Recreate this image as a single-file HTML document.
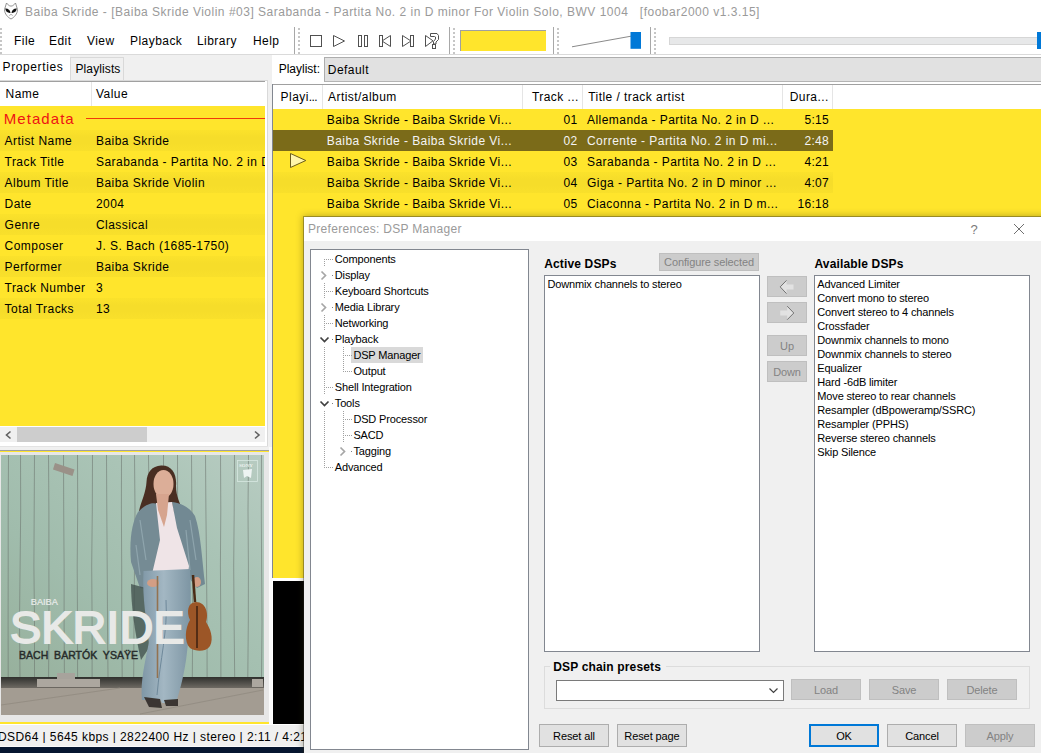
<!DOCTYPE html>
<html><head><meta charset="utf-8">
<style>
*{box-sizing:border-box;margin:0;padding:0}
html,body{width:1041px;height:753px;overflow:hidden;background:#fff}
body{position:relative;font-family:"Liberation Sans",sans-serif;color:#000}
.a{position:absolute}
.t{position:absolute;white-space:nowrap;font-size:12px;line-height:12px;letter-spacing:0.45px}
.d{position:absolute;white-space:nowrap;font-size:11px;line-height:11px;letter-spacing:-0.15px}
.b{font-weight:bold;font-size:12px;line-height:12px;letter-spacing:0.15px}
.btn{position:absolute;background:#e1e1e1;border:1px solid #adadad;font-size:11px;line-height:11px;text-align:center;white-space:nowrap;letter-spacing:-0.1px}
.dis{background:#cccccc;border-color:#bfbfbf;color:#838383}
.sep{position:absolute;width:1px;background:#a8a8a8}
.grip{position:absolute;width:2px;background:repeating-linear-gradient(to bottom,#c6c6c6 0 2px,transparent 2px 4px)}
</style></head><body>

<!-- ===== TITLE BAR ===== -->
<div class="a" style="left:0;top:0;width:1041px;height:55px;background:#fff"></div>
<svg class="a" style="left:0;top:0" width="22" height="22" viewBox="0 0 22 22">
  <path d="M6.5 3 L9.5 6 L12.5 6 L15.5 3 L17.5 9.5 C17.5 14 14 17.5 11 19 C8 17.5 4.5 14 4.5 9.5 Z" fill="#fff" stroke="#777" stroke-width="0.8"/>
  <path d="M5.2 8.6 C8 8.4 10.3 10 10.5 13 C7.5 13.3 5.5 11.5 5.2 8.6 Z" fill="#111"/>
  <path d="M16.8 8.6 C14 8.4 11.7 10 11.5 13 C14.5 13.3 16.5 11.5 16.8 8.6 Z" fill="#111"/>
  <path d="M9.3 15.5 L11 14.3 L12.7 15.5" fill="none" stroke="#888" stroke-width="0.7"/>
</svg>
<div class="t" style="left:25px;top:6px;color:#9a9a9a;letter-spacing:0.5px">Baiba Skride - [Baiba Skride Violin #03] Sarabanda - Partita No. 2 in D minor For Violin Solo, BWV 1004 &nbsp;&nbsp;[foobar2000 v1.3.15]</div>

<!-- ===== MENU / TOOLBAR ===== -->
<div class="grip" style="left:0;top:28px;height:26px"></div>
<div class="t" style="left:14px;top:34.7px">File</div>
<div class="t" style="left:49px;top:34.7px">Edit</div>
<div class="t" style="left:87px;top:34.7px">View</div>
<div class="t" style="left:130px;top:34.7px">Playback</div>
<div class="t" style="left:197px;top:34.7px">Library</div>
<div class="t" style="left:253px;top:34.7px">Help</div>
<div class="sep" style="left:294px;top:27px;height:28px"></div>
<div class="grip" style="left:298px;top:28px;height:26px"></div>
<svg class="a" style="left:305px;top:30px" width="140" height="22" viewBox="0 0 140 22">
  <g fill="none" stroke="#505050" stroke-width="1">
    <rect x="5.5" y="5.5" width="11" height="11"/>
    <path d="M28.5 5.5 L39.5 11 L28.5 16.5 Z"/>
    <rect x="53.5" y="5.5" width="3" height="11"/><rect x="59.5" y="5.5" width="3" height="11"/>
    <rect x="74.5" y="5.5" width="3" height="11"/><path d="M85.5 5.5 L77 11 L85.5 16.5 Z"/>
    <path d="M97.5 5.5 L106 11 L97.5 16.5 Z"/><rect x="105.5" y="5.5" width="3" height="11"/>
    <path d="M120.5 5.5 L128 10.8 L120.5 16.5 Z"/><path d="M125.5 3.5 H132 L133.5 5.5 V9.5 L131 12 V14 H128.5 V11.5 L130.5 9 V7 L129.5 6.5 H125.5 Z" fill="#fff"/><rect x="127.5" y="14.5" width="3" height="4"/>
  </g>
</svg>
<div class="sep" style="left:449px;top:27px;height:28px"></div>
<div class="grip" style="left:453px;top:28px;height:26px"></div>
<div class="a" style="left:460px;top:30px;width:86px;height:21px;background:#ffe52c;border-top:1px solid #a0a0a0;border-left:1px solid #a0a0a0"></div>
<div class="sep" style="left:553px;top:27px;height:28px"></div>
<div class="grip" style="left:557px;top:28px;height:26px"></div>
<svg class="a" style="left:570px;top:30px" width="80" height="22"><path d="M2 16.8 L61 6.2" stroke="#8a8a8a" stroke-width="1"/><rect x="60.5" y="2" width="10.5" height="16.8" fill="#0078d7"/></svg>
<div class="sep" style="left:650px;top:27px;height:28px"></div>
<div class="grip" style="left:654px;top:28px;height:26px"></div>
<div class="a" style="left:669px;top:37px;width:380px;height:8px;background:#e7e8e9;border:1px solid #d6d6d6"></div>
<div class="a" style="left:1037px;top:32px;width:10px;height:17px;background:#0078d7"></div>
<div class="a" style="left:0;top:54px;width:1041px;height:1px;background:#dadada"></div>

<!-- ===== LEFT PANEL ===== -->
<div class="a" style="left:0;top:55px;width:272px;height:670px;background:#f0f0f0"></div>
<div class="a" style="left:0;top:55px;width:70px;height:27px;background:#fff"></div>
<div class="a" style="left:70px;top:57px;width:54px;height:23px;background:#f0f0f0;border:1px solid #d9d9d9;border-bottom:none"></div>
<div class="t" style="left:2.6px;top:60.7px;letter-spacing:0.6px">Properties</div>
<div class="t" style="left:75.5px;top:63.3px;letter-spacing:0.1px">Playlists</div>
<!-- list box -->
<div class="a" style="left:0;top:80px;width:268px;height:367px;background:#fff;border-top:1px solid #d9d9d9;border-right:1px solid #d9d9d9"></div>
<div class="a" style="left:0;top:81px;width:265px;height:1px;background:#a0a0a0"></div>
<div class="a" style="left:91px;top:82px;width:1px;height:24px;background:#e5e5e5"></div>
<div class="t" style="left:5.6px;top:87.6px">Name</div>
<div class="t" style="left:96px;top:87.6px">Value</div>
<div class="a" id="props" style="left:0;top:106px;width:265px;height:320px;background:#ffe52c;overflow:hidden">
<div class="t" style="left:3.8px;top:5px;font-size:15px;line-height:15px;letter-spacing:1.05px;color:#ee1414">Metadata</div>
<div class="a" style="left:86px;top:12px;width:179px;height:1px;background:#f0380c"></div>
<div class="a" style="left:0;top:24px;width:265px;height:21px;background:linear-gradient(to bottom,#fbe22b,#f6dd2a 35%,#f6dd2a 65%,#f9e02b)"></div>
<div class="t" style="left:4.6px;top:29.1px">Artist Name</div>
<div class="t" style="left:96px;top:29.1px">Baiba Skride</div>
<div class="t" style="left:4.6px;top:50.1px">Track Title</div>
<div class="t" style="left:96px;top:50.1px">Sarabanda - Partita No. 2 in D minor For Violin Solo, BWV 1004</div>
<div class="a" style="left:0;top:66px;width:265px;height:21px;background:linear-gradient(to bottom,#fbe22b,#f6dd2a 35%,#f6dd2a 65%,#f9e02b)"></div>
<div class="t" style="left:4.6px;top:71.1px">Album Title</div>
<div class="t" style="left:96px;top:71.1px">Baiba Skride Violin</div>
<div class="t" style="left:4.6px;top:92.1px">Date</div>
<div class="t" style="left:96px;top:92.1px">2004</div>
<div class="a" style="left:0;top:108px;width:265px;height:21px;background:linear-gradient(to bottom,#fbe22b,#f6dd2a 35%,#f6dd2a 65%,#f9e02b)"></div>
<div class="t" style="left:4.6px;top:113.1px">Genre</div>
<div class="t" style="left:96px;top:113.1px">Classical</div>
<div class="t" style="left:4.6px;top:134.1px">Composer</div>
<div class="t" style="left:96px;top:134.1px">J. S. Bach (1685-1750)</div>
<div class="a" style="left:0;top:150px;width:265px;height:21px;background:linear-gradient(to bottom,#fbe22b,#f6dd2a 35%,#f6dd2a 65%,#f9e02b)"></div>
<div class="t" style="left:4.6px;top:155.1px">Performer</div>
<div class="t" style="left:96px;top:155.1px">Baiba Skride</div>
<div class="t" style="left:4.6px;top:176.1px">Track Number</div>
<div class="t" style="left:96px;top:176.1px">3</div>
<div class="a" style="left:0;top:192px;width:265px;height:21px;background:linear-gradient(to bottom,#fbe22b,#f6dd2a 35%,#f6dd2a 65%,#f9e02b)"></div>
<div class="t" style="left:4.6px;top:197.1px">Total Tracks</div>
<div class="t" style="left:96px;top:197.1px">13</div>
</div>


<!-- scrollbar -->
<div class="a" style="left:0;top:427px;width:265px;height:15px;background:#f0f0f0"></div>
<div class="a" style="left:17px;top:427px;width:130px;height:15px;background:#cdcdcd"></div>
<svg class="a" style="left:4px;top:430px" width="10" height="10"><path d="M6.5 1.5 L2.5 5 L6.5 8.5" fill="none" stroke="#606060" stroke-width="1.6"/></svg>
<svg class="a" style="left:252px;top:430px" width="10" height="10"><path d="M3 1.5 L7 5 L3 8.5" fill="none" stroke="#606060" stroke-width="1.6"/></svg>
<div class="a" style="left:0;top:446px;width:268px;height:1px;background:#e3e3e3"></div>

<!-- album art panel -->
<div class="a" style="left:0;top:450px;width:270px;height:1px;background:#a0a0a0"></div>
<div class="a" style="left:0;top:451px;width:270px;height:1px;background:#ffe52c"></div>
<div class="a" style="left:0;top:452px;width:269px;height:270px;background:#e7e7e7"></div><div class="a" style="left:269px;top:447px;width:3px;height:278px;background:#fbfbfb"></div>
<div class="a" style="left:0;top:722px;width:269px;height:2px;background:#ffe52c"></div>
<div class="a" id="art" style="left:1px;top:455px;width:263px;height:260px;overflow:hidden;background:#a3c0b1">
<svg width="263" height="260" viewBox="1 455 263 260" style="position:absolute;left:0;top:0">
<defs><linearGradient id="wall" x1="0" y1="1" x2="1" y2="0"><stop offset="0" stop-color="#97b09c"/><stop offset="0.35" stop-color="#a0bcac"/><stop offset="0.7" stop-color="#aac4b6"/><stop offset="1" stop-color="#b8ccc2"/></linearGradient><linearGradient id="shd" x1="0" y1="0" x2="0" y2="1"><stop offset="0" stop-color="#2f302d"/><stop offset="1" stop-color="#6e6a63"/></linearGradient><linearGradient id="jean" x1="0" y1="0" x2="1" y2="0"><stop offset="0" stop-color="#7f97a6"/><stop offset="0.45" stop-color="#a3b7c3"/><stop offset="1" stop-color="#7d95a3"/></linearGradient><filter id="bl"><feGaussianBlur stdDeviation="0.7"/></filter></defs>
<rect x="1" y="455" width="263" height="223" fill="url(#wall)"/>
<path d="M8.5 455 L8.2 510 L8.2 566 L8.1 622 L8.2 677" stroke="#68706a" stroke-width="0.6" fill="none" opacity="0.9"/>
<path d="M20.5 455 L20.7 510 L20.1 566 L19.5 622 L20.0 677" stroke="#68706a" stroke-width="0.6" fill="none" opacity="0.9"/>
<path d="M34.5 455 L34.2 510 L33.9 566 L34.5 622 L34.5 677" stroke="#68706a" stroke-width="0.6" fill="none" opacity="0.9"/>
<path d="M48.5 455 L48.9 510 L48.9 566 L49.0 622 L48.6 677" stroke="#68706a" stroke-width="0.6" fill="none" opacity="0.9"/>
<path d="M63.5 455 L63.7 510 L64.1 566 L64.1 622 L64.4 677" stroke="#68706a" stroke-width="0.6" fill="none" opacity="0.9"/>
<path d="M77.5 455 L77.7 510 L77.2 566 L77.5 622 L77.6 677" stroke="#68706a" stroke-width="0.6" fill="none" opacity="0.9"/>
<path d="M92.5 455 L92.3 510 L91.7 566 L92.1 622 L92.1 677" stroke="#68706a" stroke-width="0.6" fill="none" opacity="0.9"/>
<path d="M106.5 455 L106.8 510 L107.2 566 L107.5 622 L108.0 677" stroke="#68706a" stroke-width="0.6" fill="none" opacity="0.9"/>
<path d="M121.5 455 L121.4 510 L121.7 566 L121.7 622 L122.2 677" stroke="#68706a" stroke-width="0.6" fill="none" opacity="0.9"/>
<path d="M134.5 455 L135.0 510 L134.5 566 L134.0 622 L133.7 677" stroke="#68706a" stroke-width="0.6" fill="none" opacity="0.9"/>
<path d="M148.5 455 L149.1 510 L149.0 566 L149.1 622 L148.9 677" stroke="#68706a" stroke-width="0.6" fill="none" opacity="0.9"/>
<path d="M163.5 455 L163.5 510 L163.4 566 L163.2 622 L163.3 677" stroke="#68706a" stroke-width="0.6" fill="none" opacity="0.9"/>
<path d="M177.5 455 L177.6 510 L178.1 566 L178.3 622 L178.8 677" stroke="#68706a" stroke-width="0.6" fill="none" opacity="0.9"/>
<path d="M191.5 455 L191.9 510 L192.5 566 L192.7 622 L192.3 677" stroke="#68706a" stroke-width="0.6" fill="none" opacity="0.9"/>
<path d="M205.5 455 L205.9 510 L206.5 566 L207.0 622 L207.1 677" stroke="#68706a" stroke-width="0.6" fill="none" opacity="0.9"/>
<path d="M220.5 455 L220.8 510 L220.4 566 L220.8 622 L220.9 677" stroke="#68706a" stroke-width="0.6" fill="none" opacity="0.9"/>
<path d="M234.5 455 L234.2 510 L233.7 566 L234.1 622 L234.7 677" stroke="#68706a" stroke-width="0.6" fill="none" opacity="0.9"/>
<path d="M248.5 455 L248.0 510 L248.4 566 L248.3 622 L247.8 677" stroke="#68706a" stroke-width="0.6" fill="none" opacity="0.9"/>
<path d="M261.5 455 L261.3 510 L261.6 566 L262.0 622 L261.5 677" stroke="#68706a" stroke-width="0.6" fill="none" opacity="0.9"/>
<rect x="1" y="677" width="263" height="11" fill="url(#shd)"/>
<rect x="1" y="688" width="263" height="27" fill="#a39c92"/>
<path d="M1 705 L120 688 M140 714 L263 690" stroke="#918a80" stroke-width="0.8"/>
<rect x="37" y="679" width="63" height="8" fill="#aca79f"/><rect x="57" y="673" width="18" height="6" fill="#a7a39c"/>
<rect x="252" y="679" width="11" height="8" fill="#aca79f"/>
<path d="M53 469.5 L55 463 L74.5 469.5 L72.5 476 Z" fill="#9a9188"/>
<g filter="url(#bl)">
<path d="M161 465.5 C172 465 177 474 176 486 C176 496 180 504 184 512 C184 516 178 517 173 514 L152 514 C147 514 142 513 139 511 C141 502 146 492 146.5 482 C147 472 152 466 161 465.5 Z" fill="#4a2f22"/>
<path d="M138 512 C146 504 152 502 158 504 L163 535 L160 572 L152 590 L140 588 L131 562 C129 540 132 522 138 512 Z" fill="#758b94"/>
<path d="M172 502 C182 503 190 508 195 516 C201 534 202 560 205 584 L197 588 L189 578 L184 556 L176 528 Z" fill="#728993"/>
<path d="M140 520 L146 560 M136 545 L140 575 M190 520 L196 560 M186 530 L190 570" stroke="#9ab0b8" stroke-width="1.2" opacity="0.7"/>
<path d="M156 503 L172 502 L177 528 L189 566 L188 574 L152 574 L160 540 Z" fill="#efe4e7"/>
<ellipse cx="163.5" cy="484" rx="10" ry="14" fill="#dcae98"/>
<path d="M156 494 L169 494 L167 515 L164 527 L158 510 Z" fill="#d6a48e"/>
<path d="M131 584 L146 588 L149 648 L141 660 C135 635 131 605 131 584 Z" fill="#3f4e4b" opacity="0.75"/><path d="M143.5 571 L190 569 C192 600 190 630 187 652 C185 672 180 690 176 703 L162 703 L160 699 L142 700 C140 682 145 662 149 642 C147 622 142 600 143.5 571 Z" fill="url(#jean)"/>
<path d="M166 600 C168 630 160 660 157 695" stroke="#6e889a" stroke-width="1" fill="none"/>
<ellipse cx="153" cy="583" rx="6" ry="4" fill="#d39e85"/><ellipse cx="197" cy="582" rx="4" ry="5" fill="#d39e85"/>
<path d="M144 697 L160 699 L162 708 L149 707 Z" fill="#3a3630"/><path d="M164 700 L178 699 L178 706 L166 706 Z" fill="#3a3630"/>
</g>
<path d="M157.5 576 V678" stroke="#937250" stroke-width="1.6"/>
<path d="M193 575 L195 602" stroke="#4a2a14" stroke-width="2.5"/>
<path d="M196 602 C188 602 186 612 190 620 C185 628 184 642 190 648 C196 652 206 652 210 646 C214 638 210 628 206 622 C209 614 206 602 196 602 Z" fill="#9c5627"/>
<path d="M197 606 V648" stroke="#3d2010" stroke-width="1.5"/>
<text x="30.8" y="605.3" font-family="Liberation Sans" font-size="9" fill="#e9ecea" stroke="#e9ecea" stroke-width="0.2" textLength="27" lengthAdjust="spacingAndGlyphs">BAIBA</text>
<text x="10" y="643.3" font-family="Liberation Sans" font-size="45" fill="#e8e9e7" stroke="#e8e9e7" stroke-width="1.8" textLength="174.5" lengthAdjust="spacingAndGlyphs">SKRIDE</text>
<text x="19" y="658.6" font-family="Liberation Sans" font-size="11.5" fill="#262b2a" stroke="#262b2a" stroke-width="0.45" textLength="119" lengthAdjust="spacingAndGlyphs" xml:space="preserve">BACH  BARTÓK  YSAŸE</text>
<rect x="237.5" y="460.5" width="20" height="21" fill="none" stroke="#d8e8e2" stroke-width="0.8"/>
<text x="239" y="467" font-family="Liberation Serif" font-weight="bold" font-size="5" fill="#eef4f2">SONY</text>
<path d="M243 470 L252 469 L251 478 L247 476 L244 478 Z" fill="#eef4f2"/>
</svg>
</div>

<!-- status bar -->
<div class="a" style="left:0;top:725px;width:304px;height:21px;background:#f0f0f0"></div>
<div class="a" style="left:0;top:724px;width:304px;height:1px;background:#fff"></div>
<div class="t" style="left:-2px;top:731px;width:306px;overflow:hidden;letter-spacing:0.42px">DSD64 | 5645 kbps | 2822400 Hz | stereo | 2:11 / 4:21</div>
<div class="a" style="left:0;top:746px;width:304px;height:1px;background:#fafafa"></div><div class="a" style="left:0;top:747px;width:304px;height:6px;background:#061630"></div>

<!-- ===== PLAYLIST PANEL ===== -->
<div class="a" style="left:272px;top:55px;width:769px;height:670px;background:#fff"></div>
<div class="t" style="left:278.7px;top:62.6px;letter-spacing:0px">Playlist:</div>
<div class="a" style="left:324px;top:57px;width:717px;height:25px;background:#e1e1e1;border-top:1px solid #adadad;border-left:1px solid #adadad;border-bottom:1px solid #b4b4b4"></div>
<div class="t" style="left:327.8px;top:63.5px">Default</div>
<div class="a" style="left:272px;top:84px;width:769px;height:1px;background:#a0a0a0"></div>
<div class="a" style="left:272px;top:84px;width:1px;height:494px;background:#828790"></div>
<div class="a" id="pl" style="left:273px;top:85px;width:768px;height:493px;background:#fff;overflow:hidden">
<div class="a" style="left:49px;top:0;width:1px;height:24px;background:#e5e5e5"></div>
<div class="a" style="left:249px;top:0;width:1px;height:24px;background:#e5e5e5"></div>
<div class="a" style="left:309px;top:0;width:1px;height:24px;background:#e5e5e5"></div>
<div class="a" style="left:509px;top:0;width:1px;height:24px;background:#e5e5e5"></div>
<div class="a" style="left:559px;top:0;width:1px;height:24px;background:#e5e5e5"></div>
<div class="t" style="left:7.6px;top:5.9px;" >Playi<span style="letter-spacing:-0.6px">...</span></div>
<div class="t" style="left:55.0px;top:5.9px;">Artist/album</div>
<div class="t" style="left:258.9px;top:5.9px;">Track ...</div>
<div class="t" style="left:315.2px;top:5.9px;">Title / track artist</div>
<div class="t" style="left:516.7px;top:5.9px;">Dura...</div>
<div class="a" style="left:0;top:24px;width:768px;height:469px;background:#ffe52c"></div>
<div class="t" style="left:53.7px;top:28.6px;">Baiba Skride - Baiba Skride Vi...</div>
<div class="t" style="left:249px;top:28.6px;width:55.5px;text-align:right;letter-spacing:0.3px">01</div>
<div class="t" style="left:314.0px;top:28.6px;">Allemanda - Partita No. 2 in D ...</div>
<div class="t" style="left:509px;top:28.6px;width:47px;text-align:right;letter-spacing:0.3px">5:15</div>
<div class="a" style="left:0;top:45px;width:560px;height:21px;background:#7b6b19"></div>
<div class="t" style="left:53.7px;top:49.6px;color:#f4f4f4;">Baiba Skride - Baiba Skride Vi...</div>
<div class="t" style="left:249px;top:49.6px;width:55.5px;text-align:right;color:#f4f4f4;letter-spacing:0.3px">02</div>
<div class="t" style="left:314.0px;top:49.6px;color:#f4f4f4;">Corrente - Partita No. 2 in D mi...</div>
<div class="t" style="left:509px;top:49.6px;width:47px;text-align:right;color:#f4f4f4;letter-spacing:0.3px">2:48</div>
<div class="t" style="left:53.7px;top:70.6px;">Baiba Skride - Baiba Skride Vi...</div>
<div class="t" style="left:249px;top:70.6px;width:55.5px;text-align:right;letter-spacing:0.3px">03</div>
<div class="t" style="left:314.0px;top:70.6px;">Sarabanda - Partita No. 2 in D ...</div>
<div class="t" style="left:509px;top:70.6px;width:47px;text-align:right;letter-spacing:0.3px">4:21</div>
<div class="a" style="left:0;top:87px;width:560px;height:21px;background:linear-gradient(to bottom,#fbe22b,#f6dd2a 35%,#f6dd2a 65%,#f9e02b)"></div>
<div class="t" style="left:53.7px;top:91.6px;">Baiba Skride - Baiba Skride Vi...</div>
<div class="t" style="left:249px;top:91.6px;width:55.5px;text-align:right;letter-spacing:0.3px">04</div>
<div class="t" style="left:314.0px;top:91.6px;">Giga - Partita No. 2 in D minor ...</div>
<div class="t" style="left:509px;top:91.6px;width:47px;text-align:right;letter-spacing:0.3px">4:07</div>
<div class="t" style="left:53.7px;top:112.6px;">Baiba Skride - Baiba Skride Vi...</div>
<div class="t" style="left:249px;top:112.6px;width:55.5px;text-align:right;letter-spacing:0.3px">05</div>
<div class="t" style="left:314.0px;top:112.6px;">Ciaconna - Partita No. 2 in D m...</div>
<div class="t" style="left:509px;top:112.6px;width:47px;text-align:right;letter-spacing:0.3px">16:18</div>
<svg class="a" style="left:16px;top:67px" width="20" height="19"><defs><linearGradient id="pg" x1="0" y1="0" x2="1" y2="1"><stop offset="0" stop-color="#fff7b0"/><stop offset="1" stop-color="#fff3a0"/></linearGradient></defs><path d="M1.5 1.5 L16.8 8.5 L1.5 15.5 Z" fill="url(#pg)" stroke="#6a5c1c" stroke-width="1"/></svg>
</div>
<div class="a" style="left:273px;top:581px;width:31px;height:143px;background:#000"></div>


<!-- ===== DIALOG ===== -->
<div class="a" style="left:303px;top:216px;width:760px;height:560px;background:#f0f0f0;background-clip:padding-box;border:1px solid rgba(40,40,40,0.35);box-shadow:0 0 7px 0px rgba(50,40,0,0.35)"></div>
<div class="a" style="left:304px;top:217px;width:737px;height:24px;background:#fff"></div>
<div class="t" style="left:308px;top:222.7px;color:#9a9a9a;letter-spacing:0.3px">Preferences: DSP Manager</div>
<div class="t" style="left:970.5px;top:222.5px;color:#7a7a7a;font-size:13px;line-height:13px">?</div>
<svg class="a" style="left:1013px;top:223px" width="12" height="12"><path d="M1 1 L11 11 M11 1 L1 11" stroke="#707070" stroke-width="1"/></svg>
<div class="a" style="left:310px;top:249px;width:219px;height:501px;background:#fff;border:1px solid #828790"></div>
<div class="d" style="left:334.8px;top:254.4px">Components</div>
<div class="d" style="left:334.8px;top:270.4px">Display</div>
<div class="d" style="left:334.8px;top:286.4px">Keyboard Shortcuts</div>
<div class="d" style="left:334.8px;top:302.4px">Media Library</div>
<div class="d" style="left:334.8px;top:318.4px">Networking</div>
<div class="d" style="left:334.8px;top:334.4px">Playback</div>
<div class="a" style="left:351px;top:347px;width:72px;height:16px;background:#d9d9d9"></div>
<div class="d" style="left:353.4px;top:350.4px">DSP Manager</div>
<div class="d" style="left:353.4px;top:366.4px">Output</div>
<div class="d" style="left:334.8px;top:382.4px">Shell Integration</div>
<div class="d" style="left:334.8px;top:398.4px">Tools</div>
<div class="d" style="left:353.4px;top:414.4px">DSD Processor</div>
<div class="d" style="left:353.4px;top:430.4px">SACD</div>
<div class="d" style="left:353.4px;top:446.4px">Tagging</div>
<div class="d" style="left:334.8px;top:462.4px">Advanced</div>
<svg class="a" style="left:310px;top:249px" width="120" height="240" viewBox="310 249 120 240"><rect x="326" y="259" width="1" height="1" fill="#a0a0a0"/><rect x="328" y="259" width="1" height="1" fill="#a0a0a0"/><rect x="330" y="259" width="1" height="1" fill="#a0a0a0"/><rect x="332" y="259" width="1" height="1" fill="#a0a0a0"/><path d="M321.5 271.5 L325.5 275.5 L321.5 279.5" fill="none" stroke="#a6a6a6" stroke-width="1.7"/><rect x="332" y="275" width="1" height="1" fill="#808080"/><rect x="326" y="291" width="1" height="1" fill="#a0a0a0"/><rect x="328" y="291" width="1" height="1" fill="#a0a0a0"/><rect x="330" y="291" width="1" height="1" fill="#a0a0a0"/><rect x="332" y="291" width="1" height="1" fill="#a0a0a0"/><path d="M321.5 303.5 L325.5 307.5 L321.5 311.5" fill="none" stroke="#a6a6a6" stroke-width="1.7"/><rect x="332" y="307" width="1" height="1" fill="#808080"/><rect x="326" y="323" width="1" height="1" fill="#a0a0a0"/><rect x="328" y="323" width="1" height="1" fill="#a0a0a0"/><rect x="330" y="323" width="1" height="1" fill="#a0a0a0"/><rect x="332" y="323" width="1" height="1" fill="#a0a0a0"/><path d="M320.5 337.5 L324.5 341.5 L328.5 337.5" fill="none" stroke="#404040" stroke-width="1.7"/><rect x="332" y="339" width="1" height="1" fill="#808080"/><rect x="345" y="355" width="1" height="1" fill="#a0a0a0"/><rect x="347" y="355" width="1" height="1" fill="#a0a0a0"/><rect x="349" y="355" width="1" height="1" fill="#a0a0a0"/><rect x="351" y="355" width="1" height="1" fill="#a0a0a0"/><rect x="345" y="371" width="1" height="1" fill="#a0a0a0"/><rect x="347" y="371" width="1" height="1" fill="#a0a0a0"/><rect x="349" y="371" width="1" height="1" fill="#a0a0a0"/><rect x="351" y="371" width="1" height="1" fill="#a0a0a0"/><rect x="326" y="387" width="1" height="1" fill="#a0a0a0"/><rect x="328" y="387" width="1" height="1" fill="#a0a0a0"/><rect x="330" y="387" width="1" height="1" fill="#a0a0a0"/><rect x="332" y="387" width="1" height="1" fill="#a0a0a0"/><path d="M320.5 401.5 L324.5 405.5 L328.5 401.5" fill="none" stroke="#404040" stroke-width="1.7"/><rect x="332" y="403" width="1" height="1" fill="#808080"/><rect x="345" y="419" width="1" height="1" fill="#a0a0a0"/><rect x="347" y="419" width="1" height="1" fill="#a0a0a0"/><rect x="349" y="419" width="1" height="1" fill="#a0a0a0"/><rect x="351" y="419" width="1" height="1" fill="#a0a0a0"/><rect x="345" y="435" width="1" height="1" fill="#a0a0a0"/><rect x="347" y="435" width="1" height="1" fill="#a0a0a0"/><rect x="349" y="435" width="1" height="1" fill="#a0a0a0"/><rect x="351" y="435" width="1" height="1" fill="#a0a0a0"/><path d="M340.5 447.5 L344.5 451.5 L340.5 455.5" fill="none" stroke="#a6a6a6" stroke-width="1.7"/><rect x="351" y="451" width="1" height="1" fill="#808080"/><rect x="326" y="467" width="1" height="1" fill="#a0a0a0"/><rect x="328" y="467" width="1" height="1" fill="#a0a0a0"/><rect x="330" y="467" width="1" height="1" fill="#a0a0a0"/><rect x="332" y="467" width="1" height="1" fill="#a0a0a0"/><rect x="324" y="259" width="1" height="1" fill="#a0a0a0"/><rect x="324" y="261" width="1" height="1" fill="#a0a0a0"/><rect x="324" y="263" width="1" height="1" fill="#a0a0a0"/><rect x="324" y="265" width="1" height="1" fill="#a0a0a0"/><rect x="324" y="283" width="1" height="1" fill="#a0a0a0"/><rect x="324" y="285" width="1" height="1" fill="#a0a0a0"/><rect x="324" y="287" width="1" height="1" fill="#a0a0a0"/><rect x="324" y="289" width="1" height="1" fill="#a0a0a0"/><rect x="324" y="291" width="1" height="1" fill="#a0a0a0"/><rect x="324" y="293" width="1" height="1" fill="#a0a0a0"/><rect x="324" y="295" width="1" height="1" fill="#a0a0a0"/><rect x="324" y="297" width="1" height="1" fill="#a0a0a0"/><rect x="324" y="315" width="1" height="1" fill="#a0a0a0"/><rect x="324" y="317" width="1" height="1" fill="#a0a0a0"/><rect x="324" y="319" width="1" height="1" fill="#a0a0a0"/><rect x="324" y="321" width="1" height="1" fill="#a0a0a0"/><rect x="324" y="323" width="1" height="1" fill="#a0a0a0"/><rect x="324" y="325" width="1" height="1" fill="#a0a0a0"/><rect x="324" y="327" width="1" height="1" fill="#a0a0a0"/><rect x="324" y="329" width="1" height="1" fill="#a0a0a0"/><rect x="324" y="347" width="1" height="1" fill="#a0a0a0"/><rect x="324" y="349" width="1" height="1" fill="#a0a0a0"/><rect x="324" y="351" width="1" height="1" fill="#a0a0a0"/><rect x="324" y="353" width="1" height="1" fill="#a0a0a0"/><rect x="324" y="355" width="1" height="1" fill="#a0a0a0"/><rect x="324" y="357" width="1" height="1" fill="#a0a0a0"/><rect x="324" y="359" width="1" height="1" fill="#a0a0a0"/><rect x="324" y="361" width="1" height="1" fill="#a0a0a0"/><rect x="324" y="363" width="1" height="1" fill="#a0a0a0"/><rect x="324" y="365" width="1" height="1" fill="#a0a0a0"/><rect x="324" y="367" width="1" height="1" fill="#a0a0a0"/><rect x="324" y="369" width="1" height="1" fill="#a0a0a0"/><rect x="324" y="371" width="1" height="1" fill="#a0a0a0"/><rect x="324" y="373" width="1" height="1" fill="#a0a0a0"/><rect x="324" y="375" width="1" height="1" fill="#a0a0a0"/><rect x="324" y="377" width="1" height="1" fill="#a0a0a0"/><rect x="324" y="379" width="1" height="1" fill="#a0a0a0"/><rect x="324" y="381" width="1" height="1" fill="#a0a0a0"/><rect x="324" y="383" width="1" height="1" fill="#a0a0a0"/><rect x="324" y="385" width="1" height="1" fill="#a0a0a0"/><rect x="324" y="387" width="1" height="1" fill="#a0a0a0"/><rect x="324" y="389" width="1" height="1" fill="#a0a0a0"/><rect x="324" y="391" width="1" height="1" fill="#a0a0a0"/><rect x="324" y="393" width="1" height="1" fill="#a0a0a0"/><rect x="324" y="411" width="1" height="1" fill="#a0a0a0"/><rect x="324" y="413" width="1" height="1" fill="#a0a0a0"/><rect x="324" y="415" width="1" height="1" fill="#a0a0a0"/><rect x="324" y="417" width="1" height="1" fill="#a0a0a0"/><rect x="324" y="419" width="1" height="1" fill="#a0a0a0"/><rect x="324" y="421" width="1" height="1" fill="#a0a0a0"/><rect x="324" y="423" width="1" height="1" fill="#a0a0a0"/><rect x="324" y="425" width="1" height="1" fill="#a0a0a0"/><rect x="324" y="427" width="1" height="1" fill="#a0a0a0"/><rect x="324" y="429" width="1" height="1" fill="#a0a0a0"/><rect x="324" y="431" width="1" height="1" fill="#a0a0a0"/><rect x="324" y="433" width="1" height="1" fill="#a0a0a0"/><rect x="324" y="435" width="1" height="1" fill="#a0a0a0"/><rect x="324" y="437" width="1" height="1" fill="#a0a0a0"/><rect x="324" y="439" width="1" height="1" fill="#a0a0a0"/><rect x="324" y="441" width="1" height="1" fill="#a0a0a0"/><rect x="324" y="443" width="1" height="1" fill="#a0a0a0"/><rect x="324" y="445" width="1" height="1" fill="#a0a0a0"/><rect x="324" y="447" width="1" height="1" fill="#a0a0a0"/><rect x="324" y="449" width="1" height="1" fill="#a0a0a0"/><rect x="324" y="451" width="1" height="1" fill="#a0a0a0"/><rect x="324" y="453" width="1" height="1" fill="#a0a0a0"/><rect x="324" y="455" width="1" height="1" fill="#a0a0a0"/><rect x="324" y="457" width="1" height="1" fill="#a0a0a0"/><rect x="324" y="459" width="1" height="1" fill="#a0a0a0"/><rect x="324" y="461" width="1" height="1" fill="#a0a0a0"/><rect x="324" y="463" width="1" height="1" fill="#a0a0a0"/><rect x="324" y="465" width="1" height="1" fill="#a0a0a0"/><rect x="324" y="467" width="1" height="1" fill="#a0a0a0"/><rect x="343" y="347" width="1" height="1" fill="#a0a0a0"/><rect x="343" y="349" width="1" height="1" fill="#a0a0a0"/><rect x="343" y="351" width="1" height="1" fill="#a0a0a0"/><rect x="343" y="353" width="1" height="1" fill="#a0a0a0"/><rect x="343" y="355" width="1" height="1" fill="#a0a0a0"/><rect x="343" y="357" width="1" height="1" fill="#a0a0a0"/><rect x="343" y="359" width="1" height="1" fill="#a0a0a0"/><rect x="343" y="361" width="1" height="1" fill="#a0a0a0"/><rect x="343" y="363" width="1" height="1" fill="#a0a0a0"/><rect x="343" y="365" width="1" height="1" fill="#a0a0a0"/><rect x="343" y="367" width="1" height="1" fill="#a0a0a0"/><rect x="343" y="369" width="1" height="1" fill="#a0a0a0"/><rect x="343" y="371" width="1" height="1" fill="#a0a0a0"/><rect x="343" y="411" width="1" height="1" fill="#a0a0a0"/><rect x="343" y="413" width="1" height="1" fill="#a0a0a0"/><rect x="343" y="415" width="1" height="1" fill="#a0a0a0"/><rect x="343" y="417" width="1" height="1" fill="#a0a0a0"/><rect x="343" y="419" width="1" height="1" fill="#a0a0a0"/><rect x="343" y="421" width="1" height="1" fill="#a0a0a0"/><rect x="343" y="423" width="1" height="1" fill="#a0a0a0"/><rect x="343" y="425" width="1" height="1" fill="#a0a0a0"/><rect x="343" y="427" width="1" height="1" fill="#a0a0a0"/><rect x="343" y="429" width="1" height="1" fill="#a0a0a0"/><rect x="343" y="431" width="1" height="1" fill="#a0a0a0"/><rect x="343" y="433" width="1" height="1" fill="#a0a0a0"/><rect x="343" y="435" width="1" height="1" fill="#a0a0a0"/><rect x="343" y="437" width="1" height="1" fill="#a0a0a0"/><rect x="343" y="439" width="1" height="1" fill="#a0a0a0"/><rect x="343" y="441" width="1" height="1" fill="#a0a0a0"/></svg>
<div class="t b" style="left:544.2px;top:257.6px">Active DSPs</div>
<div class="btn dis" style="left:659px;top:253px;width:100px;height:18px;padding-top:3px">Configure selected</div>
<div class="a" style="left:544px;top:275px;width:216px;height:377px;background:#fff;border:1px solid #828790"></div>
<div class="d" style="left:547.5px;top:278.5px">Downmix channels to stereo</div>
<div class="btn dis" style="left:767px;top:276px;width:40px;height:21px"></div>
<div class="btn dis" style="left:767px;top:302px;width:40px;height:21px"></div>
<div class="btn dis" style="left:767px;top:335px;width:40px;height:21px"></div>
<div class="btn dis" style="left:767px;top:361px;width:40px;height:21px"></div>
<svg class="a" style="left:767px;top:276px" width="40" height="21"><path d="M19.5 4.4 L13.2 10.9 L19.5 17.6 V13.4 H26.5 V8.4 H19.5 Z" fill="#e2e2e2"/><path d="M19.5 4.4 L13.2 10.9 L19.5 17.6" fill="none" stroke="#505050" stroke-width="0.75"/></svg>
<svg class="a" style="left:767px;top:302px" width="40" height="21"><path d="M20.2 4.2 L26.8 11 L20.2 17.7 V13.5 H13.2 V8.6 H20.2 Z" fill="#e2e2e2"/><path d="M20.2 4.2 L26.8 11 L20.2 17.7" fill="none" stroke="#505050" stroke-width="0.75"/></svg>
<div class="d" style="left:767px;top:340.5px;width:40px;text-align:center;color:#838383">Up</div>
<div class="d" style="left:767px;top:366.5px;width:40px;text-align:center;color:#838383">Down</div>
<div class="t b" style="left:814.5px;top:257.6px">Available DSPs</div>
<div class="a" style="left:814px;top:275px;width:216px;height:377px;background:#fff;border:1px solid #828790"></div>
<div class="d" style="left:817.3px;top:279.4px">Advanced Limiter</div>
<div class="d" style="left:817.3px;top:293.4px">Convert mono to stereo</div>
<div class="d" style="left:817.3px;top:307.4px">Convert stereo to 4 channels</div>
<div class="d" style="left:817.3px;top:321.4px">Crossfader</div>
<div class="d" style="left:817.3px;top:335.4px">Downmix channels to mono</div>
<div class="d" style="left:817.3px;top:349.4px">Downmix channels to stereo</div>
<div class="d" style="left:817.3px;top:363.4px">Equalizer</div>
<div class="d" style="left:817.3px;top:377.4px">Hard -6dB limiter</div>
<div class="d" style="left:817.3px;top:391.4px">Move stereo to rear channels</div>
<div class="d" style="left:817.3px;top:405.4px">Resampler (dBpoweramp/SSRC)</div>
<div class="d" style="left:817.3px;top:419.4px">Resampler (PPHS)</div>
<div class="d" style="left:817.3px;top:433.4px">Reverse stereo channels</div>
<div class="d" style="left:817.3px;top:447.4px">Skip Silence</div>
<div class="a" style="left:544px;top:666px;width:486px;height:43px;border:1px solid #dcdcdc"></div>
<div class="a" style="left:550px;top:660px;width:116px;height:12px;background:#f0f0f0"></div>
<div class="t b" style="left:553.3px;top:660.8px">DSP chain presets</div>
<div class="a" style="left:556px;top:680px;width:228px;height:21px;background:#fff;border:1px solid #7a7a7a"></div>
<svg class="a" style="left:768px;top:686px" width="12" height="10"><path d="M1.5 2.5 L5.5 6.5 L9.5 2.5" fill="none" stroke="#404040" stroke-width="1.2"/></svg>
<div class="btn dis" style="left:791px;top:679px;width:70px;height:21px;padding-top:5px">Load</div>
<div class="btn dis" style="left:869px;top:679px;width:70px;height:21px;padding-top:5px">Save</div>
<div class="btn dis" style="left:947px;top:679px;width:70px;height:21px;padding-top:5px">Delete</div>
<div class="btn" style="left:539px;top:724px;width:70px;height:23px;padding-top:6px">Reset all</div>
<div class="btn" style="left:617px;top:724px;width:70px;height:23px;padding-top:6px">Reset page</div>
<div class="btn" style="left:809px;top:724px;width:70px;height:23px;padding-top:5px;border:2px solid #0078d7">OK</div>
<div class="btn" style="left:887px;top:724px;width:70px;height:23px;padding-top:6px">Cancel</div>
<div class="btn dis" style="left:965px;top:724px;width:70px;height:23px;padding-top:6px">Apply</div>
</body></html>
